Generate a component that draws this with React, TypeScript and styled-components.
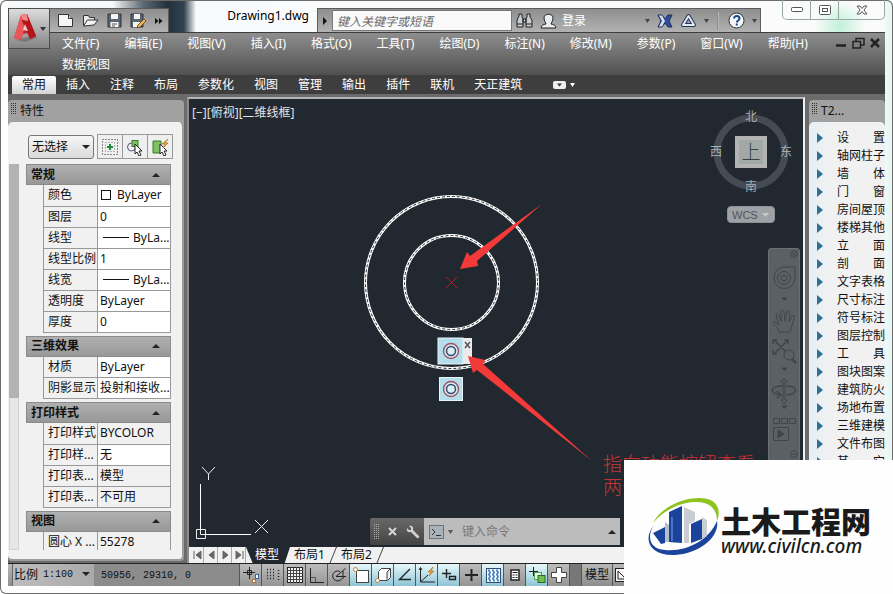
import React from "react";
import styled, { createGlobalStyle, css } from "styled-components";

const Global = createGlobalStyle`
  * { box-sizing: border-box; }
  html, body { margin: 0; height: 100%; background: #fff; }
  body {
    font: 12px/16px "Noto Sans", "Noto Sans CJK SC", sans-serif;
    color: #111;
    overflow: hidden;
  }
  button, input, select { font: inherit; color: inherit; margin: 0; padding: 0; border: 0; border-radius: 0; background: none; }
  select { appearance: none; }
  svg { display: block; flex: none; }
`;

/* ---------- window frame ---------- */

const Window = styled.div`
  position: relative;
  display: flex;
  flex-direction: column;
  height: 100vh;
  padding: 0 7px 7px;
  border: 1px solid #6c6c6c;
  border-top-width: 0;
  border-radius: 6px;
  box-shadow: inset 0 1px #6c6c6c;
  background: linear-gradient(90deg, #fff 0 98%, #e4f6f3 100%);
  overflow: hidden;
`;

const TitleBar = styled.header`
  display: flex;
  align-items: flex-end;
  height: 32px;
  background:
    radial-gradient(circle at 832px 26px, #bff0d8 0, transparent 26px),
    linear-gradient(90deg, #f6f7f8 105px, #5d6a74 135px, #22303b 160px, #33434f 176px, #f9fafb 188px, #fbfbfc 100%);
  box-shadow: inset 0 1px #6c6c6c;
  flex: none;
`;

const barFill = css`
  background: linear-gradient(#8e8e8e, #b2b2b2);
  border: 1px solid #5c5c5c;
  border-bottom: 0;
`;

const AppButton = styled.button`
  position: absolute;
  z-index: 2;
  left: 7px;
  top: 8px;
  display: flex;
  align-items: center;
  justify-content: center;
  gap: 2px;
  width: 42px;
  height: 41px;
  border: 1px solid #4b4b4b;
  background: linear-gradient(#dcdcdc, #858585);
`;

const QuickBar = styled.div`
  ${barFill}
  display: flex;
  align-items: center;
  gap: 8px;
  width: 122px;
  height: 24px;
  margin-left: 41px;
  padding-left: 7px;
`;

const IconButton = styled.button`
  display: flex;
  align-items: center;
  justify-content: center;
  flex: none;
`;

const FileName = styled.h1`
  flex: 1;
  margin: 0;
  padding: 0 8px 0 58px;
  font-size: 12px;
  font-weight: 400;
  line-height: 32px;
  color: #000;
  white-space: nowrap;
`;

const SearchBar = styled.div`
  ${barFill}
  display: flex;
  align-items: center;
  width: 444px;
  height: 24px;
  margin-right: 21px;
  flex: none;
`;

const SearchInput = styled.input`
  width: 180px;
  height: 21px;
  padding: 2px 4px 0;
  border: 1px solid #777;
  background: #fafafa;
  font-style: italic;
  &::placeholder { color: #666; opacity: 1; }
`;

const SearchTools = styled.div`
  display: flex;
  flex: 1;
  align-items: center;
  justify-content: space-between;
  padding: 0 3px 0 4px;
`;

const ToolCluster = styled.div`
  display: flex;
  align-items: center;
  gap: 7px;
`;

const SignIn = styled.button`
  display: flex;
  align-items: center;
  gap: 5px;
  color: #fff;
  white-space: nowrap;
`;

const WindowButtons = styled.div`
  display: flex;
  align-self: flex-start;
  width: 103px;
  height: 20px;
  border: 1px solid #9aa5a5;
  border-top: 0;
  border-radius: 0 0 5px 5px;
  flex: none;
`;

const WindowButton = styled.button<{ $wide?: boolean }>`
  display: flex;
  align-items: center;
  justify-content: center;
  flex: ${(p) => (p.$wide ? 46 : 28)};
  & + & { border-left: 1px solid #9aa5a5; }
`;

/* ---------- menus and ribbon ---------- */

const MenuRow = styled.div`
  display: flex;
  align-items: flex-start;
  padding: 0 5px 0 54px;
  border-top: 1px solid #3d3d3d;
  background: linear-gradient(#8e8e8e, #505050);
  flex: none;
`;

const Menu = styled.nav`
  display: flex;
  flex: 1;
  flex-wrap: wrap;
  column-gap: 25px;
`;

const MenuItem = styled.button`
  height: 21px;
  line-height: 20px;
  color: #fff;
  white-space: nowrap;
`;

const DocButtons = styled.div`
  display: flex;
  gap: 5px;
  margin-top: 4px;
`;

const Ribbon = styled.div`
  display: flex;
  align-items: stretch;
  height: 19px;
  padding-left: 4px;
  background: #3e3e3e;
  flex: none;
`;

const RibbonTab = styled.button<{ $active?: boolean }>`
  padding: 0 10px;
  color: ${(p) => (p.$active ? "#111" : "#fff")};
  background: ${(p) => (p.$active ? "linear-gradient(#fff, #d4d4d4)" : "none")};
  line-height: 18px;
  margin-top: 1px;
  border-radius: 2px 2px 0 0;
  white-space: nowrap;
`;

const RibbonExtra = styled.button`
  display: flex;
  align-items: center;
  gap: 4px;
  margin-left: 21px;
`;

/* ---------- work area ---------- */

const Body = styled.main`
  display: flex;
  flex: 1;
  min-height: 0;
  padding-top: 3px;
  background: #6b6b6b;
`;

const Panel = styled.section<{ $width: number; $gap?: number }>`
  display: flex;
  flex-direction: column;
  width: ${(p) => p.$width}px;
  margin: 3px 0 2px ${(p) => p.$gap || 0}px;
  border-radius: 4px;
  background: #a1a1a1;
  overflow: hidden;
  flex: none;
`;

const PanelTitle = styled.h2`
  display: flex;
  align-items: center;
  gap: 4px;
  height: 22px;
  margin: 0;
  padding-left: 3px;
  font-size: 12px;
  font-weight: 400;
  flex: none;
  svg { align-self: flex-start; margin-top: 3px; }
`;

const PanelBody = styled.div`
  display: flex;
  flex-direction: column;
  flex: 1;
  min-height: 0;
  padding: 12px 11px 9px 0;
  border-right: 2px solid #9c9c9c;
  border-bottom: 2px solid #9c9c9c;
  border-radius: 5px;
  background: #f1f1f1;
`;

const SelectionRow = styled.div`
  display: flex;
  align-items: center;
  height: 25px;
  margin: 0 -4px 5px 20px;
  flex: none;
`;

const SelectWrap = styled.label`
  position: relative;
  display: block;
  width: 66px;
  margin-right: 3px;
  select {
    width: 100%;
    height: 24px;
    padding-left: 3px;
    border: 1px solid #777;
    border-radius: 3px;
    background: linear-gradient(#f6f6f6, #dadada);
  }
  svg { position: absolute; right: 4px; top: 10px; pointer-events: none; }
`;

const SquareButton = styled.button`
  display: flex;
  align-items: center;
  justify-content: center;
  width: 26px;
  height: 25px;
  border: 1px solid #999;
  margin-right: -1px;
  background: #efefef;
`;

const PropertyScroll = styled.div`
  display: flex;
  flex: 1;
  min-height: 0;
  gap: 7px;
  overflow: hidden;
`;

const ScrollTrack = styled.div`
  width: 10px;
  margin-left: 1px;
  border: 1px solid #d2d2d2;
  background: #e6e6e6;
  &::before { content: ""; display: block; height: 61%; margin: -1px; background: #b2b2b2; }
  flex: none;
`;

const Groups = styled.div`
  display: flex;
  flex: 1;
  min-width: 0;
  flex-direction: column;
  gap: 3px;
  overflow: hidden;
`;

const GroupHead = styled.button`
  display: flex;
  align-items: center;
  justify-content: space-between;
  width: 100%;
  height: 21px;
  padding: 0 10px 0 4px;
  border: 1px solid #8b8b8b;
  background: linear-gradient(#b0b0b0, #989898);
  font-weight: 700;
`;

const PropTable = styled.table`
  width: 128px;
  margin-left: 17px;
  table-layout: fixed;
  border-collapse: collapse;
`;

const PropLabel = styled.th`
  width: 54px;
  height: 21px;
  padding: 0 0 0 4px;
  border: 1px solid #999;
  border-top: 0;
  font-weight: 400;
  text-align: left;
  white-space: nowrap;
  overflow: hidden;
`;

const PropValue = styled.td<{ $locked?: boolean }>`
  height: 21px;
  padding: 0 0 0 2px;
  border: 1px solid #999;
  border-top: 0;
  background: ${(p) => (p.$locked ? "#f1f1f1" : "#fff")};
  white-space: nowrap;
  overflow: hidden;
`;

const Sample = styled.span<{ $kind: "swatch" | "line" }>`
  display: inline-block;
  vertical-align: middle;
  ${(p) =>
    p.$kind === "swatch"
      ? "width: 10px; height: 10px; border: 1px solid #111; margin: -2px 6px 0 1px;"
      : "width: 26px; height: 1px; background: #111; margin: -2px 4px 0 3px;"}
`;

const DrawingColumn = styled.section`
  display: flex;
  flex: 1;
  flex-direction: column;
  min-width: 0;
  margin-left: 3px;
  border: solid;
  border-width: 2px 2px 0 2px;
  border-color: #b5b5b5 #f0f0f0 #b5b5b5 #8c8c8c;
`;

const Canvas = styled.div`
  position: relative;
  flex: 1;
  min-height: 0;
  background: #222830;
  overflow: hidden;
`;

const Drawing = styled.svg`
  position: absolute;
  left: 0;
  top: 0;
`;

const ViewLabel = styled.div`
  position: absolute;
  left: 3px;
  top: 6px;
  color: #e4e4e4;
  white-space: nowrap;
`;

const Annotation = styled.p`
  position: absolute;
  left: 414px;
  top: 354px;
  margin: 0;
  color: #c83434;
  font-size: 19px;
  font-weight: 300;
  line-height: 23px;
  white-space: nowrap;
`;

const ViewCube = styled.div`
  position: absolute;
  right: 11px;
  top: 10px;
  display: grid;
  grid-template-columns: 12px 58px 12px;
  grid-template-rows: 16px 54px 16px;
  place-items: center;
  color: #a9adb0;
`;

const CubeRing = styled.svg`
  position: absolute;
  left: 3px;
  top: 5px;
`;

const Compass = styled.span<{ $area: string }>`
  position: relative;
  grid-area: ${(p) => p.$area};
`;

const CubeFace = styled.button`
  position: relative;
  grid-area: 2 / 2;
  width: 32px;
  height: 32px;
  border: 4px solid #b2b3b2;
  background: #a2a8a5;
  color: #3a4145;
  font-size: 19px;
  font-weight: 300;
  line-height: 22px;
`;

const WcsButton = styled.button`
  position: absolute;
  right: 28px;
  top: 107px;
  display: flex;
  align-items: center;
  justify-content: space-between;
  width: 48px;
  height: 17px;
  padding: 0 5px 0 4px;
  border: 1px solid #8c9196;
  border-radius: 4px;
  background: #9ea2a6;
  font: 11px/14px "Liberation Sans", sans-serif;
  color: #50565c;
`;

const NavBar = styled.div`
  position: absolute;
  right: 3px;
  top: 149px;
  display: flex;
  flex-direction: column;
  align-items: center;
  width: 32px;
  height: 214px;
  border: 1px solid #6c7074;
  border-radius: 3px;
  background: #5b6064;
`;

const CommandBar = styled.form`
  position: absolute;
  left: 181px;
  bottom: 2px;
  display: flex;
  width: 250px;
  height: 27px;
`;

const CommandGrip = styled.div`
  display: flex;
  align-items: center;
  gap: 9px;
  width: 54px;
  padding-left: 4px;
  background: linear-gradient(#686868, #444);
  border-radius: 2px 0 0 2px;
`;

const CommandField = styled.label`
  display: flex;
  flex: 1;
  align-items: center;
  gap: 4px;
  min-width: 0;
  padding: 0 4px 0 5px;
  background: #bcbcbc;
  input { flex: 1; min-width: 0; margin-left: 5px; }
  input::placeholder { color: #777; opacity: 1; }
`;

const SheetBar = styled.div`
  display: flex;
  height: 16px;
  padding-left: 1px;
  background: #f1f1f1;
  flex: none;
`;

const SheetStep = styled.button`
  display: flex;
  align-items: center;
  justify-content: center;
  width: 14px;
  border-right: 1px solid #aaa;
`;

const SheetTab = styled.button<{ $active?: boolean }>`
  line-height: 16px;
  white-space: nowrap;
  ${(p) =>
    p.$active
      ? "padding: 0 11px 0 9px; color: #fff; background: #222830; clip-path: polygon(0 0, 100% 0, 88% 100%, 15% 100%);"
      : "padding: 0 4px;"}
`;

const TreeList = styled.ul`
  flex: 1;
  min-height: 0;
  margin: 0;
  padding: 7px 0 0 8px;
  list-style: none;
  background: linear-gradient(90deg, #e6f0f4, #f1f1f1 30%);
  border-radius: 5px 5px 0 0;
  overflow: hidden;
`;

const TreeItem = styled.button`
  display: flex;
  align-items: center;
  gap: 14px;
  height: 18px;
  white-space: pre;
`;

/* ---------- status bar ---------- */

const StatusBar = styled.footer`
  display: flex;
  height: 23px;
  padding-left: 4px;
  border-top: 1px solid #222;
  background: linear-gradient(#b8b8b8, #8e8e8e);
  flex: none;
`;

const ScaleBox = styled.label`
  position: relative;
  display: flex;
  align-items: center;
  gap: 5px;
  width: 82px;
  padding-left: 1px;
  border-left: 1px solid #666;
  background: linear-gradient(90deg, #bdbdbd, #aaa);
  white-space: nowrap;
  select { width: 48px; height: 20px; font: 10px/20px "Liberation Mono", monospace; }
  svg { position: absolute; right: 4px; top: 8px; pointer-events: none; }
`;

const Coordinates = styled.output`
  width: 145px;
  padding: 2px 0 0 7px;
  background: #8c8c8c;
  font: 10px/20px "Liberation Mono", monospace;
  white-space: nowrap;
`;

const StatusToggle = styled.button<{ $on?: boolean }>`
  display: flex;
  align-items: center;
  justify-content: center;
  width: 22px;
  border-left: 1px solid #555;
  background: ${(p) => (p.$on ? "linear-gradient(#e6f7fa, #8fc5d6)" : "linear-gradient(#bcbcbc, #959595)")};
  flex: none;
`;

const StatusGap = styled.div`
  width: 12px;
  border-left: 1px solid #555;
  background: #777;
`;

const StatusText = styled.button`
  width: 32px;
  border: solid #555;
  border-width: 0 1px;
`;

/* ---------- site badge ---------- */

const Badge = styled.a`
  position: fixed;
  right: 0;
  bottom: 0;
  display: flex;
  align-items: flex-start;
  gap: 1px;
  width: 269px;
  height: 134px;
  padding: 37px 0 0 24px;
  background: #fefefe;
  color: #1a1a1a;
  text-decoration: none;
`;

const BadgeText = styled.span`
  display: flex;
  flex-direction: column;
  margin-top: 7px;
  strong { font: 900 30px/32px "Noto Sans CJK SC", sans-serif; white-space: nowrap; }
  em { font: italic 500 19px/20px "Noto Sans", sans-serif; }
`;

/* ---------- icons ---------- */

const Caret = ({ w = 7, up = false, color = "#222" }: { w?: number; up?: boolean; color?: string }) => (
  <svg width={w} height="4" viewBox="0 0 8 4" preserveAspectRatio="none" aria-hidden="true">
    <path d={up ? "M0 4h8L4 0z" : "M0 0h8L4 4z"} fill={color} />
  </svg>
);

const Grip = ({ rows = 6, color = "#333" }: { rows?: number; color?: string }) => (
  <svg width="5" height={rows * 2} aria-hidden="true">
    {Array.from({ length: rows }, (_, i) => (
      <path key={i} d={`M0 ${i * 2 + 0.5}h1m1 0h1m1 0h1`} stroke={color} />
    ))}
  </svg>
);

const Icon = ({ size = 18, children }: { size?: number; children: React.ReactNode }) => (
  <svg width={size} height={size} viewBox="0 0 18 18" fill="none" stroke="#222" aria-hidden="true">
    {children}
  </svg>
);

const cursorPath = "M9 6v10l2-2 2 4 2-1-2-4h3z";

const statusIcons: { name: string; on?: boolean; art: React.ReactNode }[] = [
  { name: "推断约束", art: <><path d="M7.500 1v12M1 6.500h12M5.500 4.500h4v4h-4z" /><rect x="13.500" y="8.500" width="3" height="4" fill="#fff" stroke="#3567a8" /><rect x="10.500" y="13.500" width="3" height="3" fill="#fff" stroke="#b8702c" /></> },
  { name: "捕捉", art: <path d="M3 3.500h9M3 6.500h9M3 9.500h9M3 12.500h9M14.500 4v10" strokeDasharray="1 2" strokeWidth="1.500" /> },
  { name: "栅格", art: <><rect x="1.500" y="1.500" width="15" height="15" fill="#f4f4f4" /><path d="M4.500 1v16M7.500 1v16M10.500 1v16M13.500 1v16M1 4.500h16M1 7.500h16M1 10.500h16M1 13.500h16" stroke="#444" /></> },
  { name: "正交", art: <><path d="M2.500 2v14.500H16" /><path d="M3 11.500h4.500V16" stroke="#555" /></> },
  { name: "极轴", art: <path d="M10 5.500a5 5 0 1 0 2 7M15.500 2.500L6 10.500h10M13 5v8" /> },
  { name: "对象捕捉", on: true, art: <><rect x="4.500" y="4.500" width="12" height="12" fill="#fff" stroke="#444" /><circle cx="3.500" cy="3.500" r="2" fill="#fff" stroke="#c87a30" /></> },
  { name: "三维捕捉", on: true, art: <><path d="M4.500 5.500l3-3h9v9l-3 3h-9zM16 3l-3 3v8" fill="#fff" stroke="#444" /><circle cx="3.500" cy="14.500" r="2" fill="#fff" stroke="#c87a30" /></> },
  { name: "对象追踪", on: true, art: <path d="M14 3L3.500 13.500H15" strokeWidth="1.400" /> },
  { name: "动态UCS", on: true, art: <><path d="M2.500 2v14H17M3 15.500L10 9M1 4l1.500-2.500L4 4" /><path d="M15 1l-5 5 3 0-2 4 5-5h-3z" fill="#f2a43a" stroke="#b66a16" strokeWidth=".6" /></> },
  { name: "动态输入", on: true, art: <path d="M6.500 3v9M2 7.500h9M9.500 10.500h6v3h-6z" strokeWidth="1.400" /> },
  { name: "线宽", art: <path d="M9.500 3v12M3 9h13" strokeWidth="2" /> },
  { name: "透明度", on: true, art: <><rect x="2.500" y="2.500" width="14" height="14" fill="#eef8ff" stroke="#334e70" /><path d="M4 4.500h12M5 6.500h11M4 8.500h12M5 10.500h11M4 12.500h12M5 14.500h11" stroke="#4a86c8" strokeWidth="2" strokeDasharray="2 2" /></> },
  { name: "快捷特性", art: <><rect x="5" y="4" width="8" height="10" fill="#fff" strokeWidth="1.500" /><path d="M6.500 6.500h5M6.500 9h2m1 0h2M6.500 11.500h2m1 0h2" /></> },
  { name: "选择循环", on: true, art: <><path d="M5.500 1v9M1 5.500h9" /><rect x="6.500" y="6.500" width="7" height="7" fill="#eef5ee" stroke="#4a5" /><rect x="10" y="9.500" width="7" height="7" fill="#6fc04f" stroke="#276a27" /></> },
  { name: "注释监视器", art: <path d="M6.500 1.500h5v5h5v5h-5v5h-5v-5h-5v-5h5z" fill="#fff" stroke="#444" /> },
];

/* ---------- data ---------- */

const menus = ["文件(F)", "编辑(E)", "视图(V)", "插入(I)", "格式(O)", "工具(T)", "绘图(D)", "标注(N)", "修改(M)", "参数(P)", "窗口(W)", "帮助(H)", "数据视图"];
const tabs = ["常用", "插入", "注释", "布局", "参数化", "视图", "管理", "输出", "插件", "联机", "天正建筑"];

type Prop = { label: string; value: string; sample?: "swatch" | "line"; locked?: boolean };
const groups: { title: string; rows: Prop[] }[] = [
  {
    title: "常规",
    rows: [
      { label: "颜色", value: "ByLayer", sample: "swatch" },
      { label: "图层", value: "0" },
      { label: "线型", value: "ByLa...", sample: "line" },
      { label: "线型比例", value: "1" },
      { label: "线宽", value: "ByLa...", sample: "line" },
      { label: "透明度", value: "ByLayer" },
      { label: "厚度", value: "0" },
    ],
  },
  { title: "三维效果", rows: [{ label: "材质", value: "ByLayer" }, { label: "阴影显示", value: "投射和接收..." }] },
  {
    title: "打印样式",
    rows: [
      { label: "打印样式", value: "BYCOLOR", locked: true },
      { label: "打印样...", value: "无" },
      { label: "打印表...", value: "模型", locked: true },
      { label: "打印表...", value: "不可用", locked: true },
    ],
  },
  { title: "视图", rows: [{ label: "圆心 X ...", value: "55278", locked: true }] },
];

const tree = ["设　　置", "轴网柱子", "墙　　体", "门　　窗", "房间屋顶", "楼梯其他", "立　　面", "剖　　面", "文字表格", "尺寸标注", "符号标注", "图层控制", "工　　具", "图块图案", "建筑防火", "场地布置", "三维建模", "文件布图", "其　　它"];

/* ---------- sections ---------- */

const Title = () => (
  <TitleBar>
    <AppButton aria-label="应用程序菜单">
      <svg width="25" height="32" viewBox="0 0 25 32" aria-hidden="true">
        <path d="M3 27L12 29 24 25 22 22z" fill="#5c5c5c" opacity=".5" />
        <path d="M8 2l6-1 9 22-6 3-2-6-5 1-2 6-7-2z" fill="#c9262c" />
        <path d="M8 2l6-1-4 20-2 6-7-2z" fill="#e8575a" />
        <path d="M14 1l9 22-6 3L9 8z" fill="#b3151c" />
        <path d="M8 2l6-1 1 7-5-1z" fill="#f28b86" />
        <path d="M10 17l2-6 3 7z" fill="#f5c9c4" />
      </svg>
      <Caret w={6} color="#333" />
    </AppButton>
    <QuickBar>
      <IconButton aria-label="新建">
        <svg width="17" height="15" viewBox="0 0 17 15"><path d="M1.500 1.500h10l4 4v8h-14z" fill="#f4f6f8" stroke="#333" /><path d="M11.500 1.500v4h4" fill="#ccc" stroke="#333" /></svg>
      </IconButton>
      <IconButton aria-label="打开">
        <svg width="17" height="15" viewBox="0 0 17 15"><path d="M1.500 12V2.500h5l1 2h5v3" fill="#e8e8e8" stroke="#333" /><path d="M1.500 13l4-6h10.500l-4 5z" fill="#f6f6f6" stroke="#333" /></svg>
      </IconButton>
      <IconButton aria-label="保存">
        <svg width="15" height="15" viewBox="0 0 15 15"><path d="M1 1h13v13H1z" fill="#5a6670" stroke="#2c333a" /><path d="M4 1h7v5H4zM3.500 9h8v5h-8z" fill="#f4f4f4" /><path d="M5 11h5M5 13h3" stroke="#555" /></svg>
      </IconButton>
      <IconButton aria-label="另存为">
        <svg width="17" height="16" viewBox="0 0 17 16"><path d="M1 1h12v13H1z" fill="#5a6670" stroke="#2c333a" /><path d="M4 1h6v5H4zM3 9h8v5H3z" fill="#f4f4f4" /><path d="M7 15l1-3 6-6 2 2-6 6z" fill="#f1b656" stroke="#7b531d" /></svg>
      </IconButton>
      <IconButton aria-label="更多">
        <svg width="8" height="6" viewBox="0 0 8 6"><path d="M0 0l3.500 3L0 6zM4 0l3.500 3L4 6z" fill="#111" /></svg>
      </IconButton>
    </QuickBar>
    <FileName>Drawing1.dwg</FileName>
    <SearchBar role="search">
      <IconButton aria-label="展开">
        <svg width="14" height="22" viewBox="0 0 14 22"><path d="M5 7v8l4-4z" fill="#111" /></svg>
      </IconButton>
      <SearchInput aria-label="搜索" placeholder="键入关键字或短语" />
      <SearchTools>
        <ToolCluster>
          <IconButton aria-label="查找">
            <svg width="17" height="17" viewBox="0 0 17 17" fill="#c7cdd1" stroke="#222"><path d="M3 2h3v3l1 2v8H1V8l2-4zM11 2h3v3l2 3v7h-6V7l1-2zM7 7h3v3H7z" /><path d="M1 12h6M10 12h6" /></svg>
          </IconButton>
          <SignIn>
            <svg width="17" height="16" viewBox="0 0 17 16" fill="#e9edf0" stroke="#222"><path d="M1 15c0-3 3-3.500 5-4 0-1-2-3-2-6 0-5 9-5 9 0 0 3-2 5-2 6 2 .5 5 1 5 4z" /></svg>
            登录
          </SignIn>
        </ToolCluster>
        <ToolCluster>
          <Caret w={5} color="#444" />
          <IconButton aria-label="Exchange">
            <svg width="16" height="14" viewBox="0 0 16 14"><path d="M1 1h4l3 4 3-4h4l-3 6 3 6h-4L8 9l-3 4H1l3-6z" fill="#2f4f9c" stroke="#1d2f5c" /><path d="M2 1.500h3L8 7l-3 5.500H2L5 7z" fill="#d8e0f0" /></svg>
          </IconButton>
          <IconButton aria-label="保持连接">
            <svg width="17" height="15" viewBox="0 0 17 15" fill="none"><path d="M8.500 3L3 12h11z" stroke="#23355e" strokeWidth="4" strokeLinejoin="round" /><path d="M8.500 3L3 12h11z" stroke="#e3e8f2" strokeWidth="2" strokeLinejoin="round" /></svg>
          </IconButton>
          <Caret w={5} color="#444" />
          <svg width="5" height="18"><path d="M1.500 0v18" stroke="#8c8c8c" /><path d="M2.500 0v18" stroke="#b8b8b8" /></svg>
          <IconButton aria-label="帮助">
            <svg width="17" height="17" viewBox="0 0 17 17"><circle cx="8.500" cy="8.500" r="7.500" fill="#f4f7fa" stroke="#333" /><path d="M6 6.500c0-3.500 5.500-3 5.500 0 0 2-2.700 2-2.700 4M8.800 11.500v2" fill="none" stroke="#1c4a8c" strokeWidth="2" /></svg>
          </IconButton>
          <Caret w={5} color="#444" />
        </ToolCluster>
      </SearchTools>
    </SearchBar>
    <WindowButtons>
      <WindowButton aria-label="最小化"><svg width="12" height="5"><rect x=".5" y=".5" width="11" height="4" rx="1" fill="#fff" stroke="#555" /></svg></WindowButton>
      <WindowButton aria-label="还原"><svg width="12" height="10"><rect x=".5" y=".5" width="11" height="9" rx="1" fill="#fff" stroke="#555" /><rect x="3.500" y="3.500" width="5" height="3" fill="none" stroke="#555" /></svg></WindowButton>
      <WindowButton $wide aria-label="关闭"><svg width="12" height="10"><path d="M1 1h3l2 2.500L8 1h3L8 5l3 4H8L6 6.500 4 9H1l3-4z" fill="#fff" stroke="#555" /></svg></WindowButton>
    </WindowButtons>
  </TitleBar>
);

const Properties = () => (
  <Panel $width={176}>
    <PanelTitle><Grip />特性</PanelTitle>
    <PanelBody>
      <SelectionRow>
        <SelectWrap>
          <select aria-label="选择对象"><option>无选择</option></select>
          <Caret w={8} />
        </SelectWrap>
        <SquareButton aria-label="切换 PICKADD"><Icon><rect x="1.500" y="1.500" width="15" height="15" strokeDasharray="1 2" /><rect x="4.500" y="4.500" width="9" height="9" stroke="#777" strokeDasharray="1 2" /><path d="M9 6v6M6 9h6" stroke="#1d8a3c" strokeWidth="2" /></Icon></SquareButton>
        <SquareButton aria-label="选择对象"><Icon><circle cx="5.500" cy="9" r="4" stroke="#557" /><rect x="6" y="2.500" width="6" height="6" fill="#7fc263" stroke="#3b7a2b" /><path d={cursorPath} fill="#fff" /></Icon></SquareButton>
        <SquareButton aria-label="快速选择"><Icon><path d="M2 3h8v12H2z" fill="#7fc263" stroke="#3b7a2b" /><path d={cursorPath} fill="#fff" /><path d="M17 1l-6 5h3l-2 4 5-5h-3z" fill="#f5b83c" stroke="#a8681c" strokeWidth=".7" /></Icon></SquareButton>
      </SelectionRow>
      <PropertyScroll>
        <ScrollTrack />
        <Groups>
          {groups.map((g) => (
            <div key={g.title}>
              <GroupHead>{g.title}<Caret w={8} up /></GroupHead>
              <PropTable>
                <tbody>
                  {g.rows.map((r, i) => (
                    <tr key={i}>
                      <PropLabel scope="row">{r.label}</PropLabel>
                      <PropValue $locked={r.locked}>{r.sample && <Sample $kind={r.sample} />}{r.value}</PropValue>
                    </tr>
                  ))}
                </tbody>
              </PropTable>
            </div>
          ))}
        </Groups>
      </PropertyScroll>
    </PanelBody>
  </Panel>
);

const DrawingArea = () => (
  <DrawingColumn>
    <Canvas>
      <ViewLabel>[−][俯视][二维线框]</ViewLabel>
      <Annotation>指向功能按钮查看<br />两个功能</Annotation>
      <Drawing width="614" height="448" viewBox="189 99 614 448" fill="none" aria-hidden="true">
        {[86, 47].map((r) => (
          <g key={r}>
            <circle cx="451.500" cy="282.500" r={r} stroke="#fff" strokeWidth="3" />
            <circle cx="451.500" cy="282.500" r={r} stroke="#222830" strokeWidth="1" strokeDasharray="3 2" />
          </g>
        ))}
        <path d="M446 277l11 11M457 277l-11 11" stroke="#a82228" />
        <path d="M200.500 484v45M206 534.500h45" stroke="#fff" />
        <path d="M196.500 529.500h9v9h-9zM200.500 529v5.500H206M202 467l6.500 7v6M215 467l-6.500 7M255 520l13 13M268 520l-13 13" stroke="#eee" />
        <rect x="438" y="338" width="25" height="26" fill="#b5deec" stroke="#e8f4f8" />
        <rect x="463" y="338" width="9" height="26" fill="#eaeaea" />
        <path d="M465 342l5 6M470 342l-5 6" stroke="#555" strokeWidth="1.500" />
        <rect x="439.500" y="377.500" width="23" height="23" fill="#b5deec" stroke="#e8f4f8" />
        {[351, 389].map((y) => (
          <g key={y}>
            <circle cx="451" cy={y} r="7.500" fill="#d8edf4" stroke="#9c5363" strokeWidth="1.400" />
            <circle cx="451" cy={y} r="4.500" stroke="#34496b" strokeWidth="1.500" />
          </g>
        ))}
        <path d="M460 269l7-17 3 4 72-52-65 57 1 5z" fill="#f43a38" />
        <path d="M468 356l17 4-2 4 109 97-115-91-4 3z" fill="#f43a38" />
      </Drawing>
      <ViewCube>
        <CubeRing width="76" height="76" viewBox="0 0 76 76" fill="none" aria-hidden="true"><circle cx="38" cy="38" r="34" stroke="#444b53" strokeWidth="7" /></CubeRing>
        <Compass $area="1 / 2">北</Compass>
        <Compass $area="2 / 1">西</Compass>
        <CubeFace>上</CubeFace>
        <Compass $area="2 / 3">东</Compass>
        <Compass $area="3 / 2">南</Compass>
      </ViewCube>
      <WcsButton>WCS<Caret w={7} color="#c5c9cc" /></WcsButton>
      <NavBar aria-label="导航栏">
        <svg width="30" height="212" viewBox="0 0 30 212" fill="none" stroke="#3f4549" aria-hidden="true">
          <circle cx="25" cy="5" r="3.500" /><path d="M23 3l4 4M27 3l-4 4" />
          <path d="M5 29a10.500 10.500 0 0 1 10-11h11v11a10.500 10.500 0 0 1-21 0z" /><circle cx="15" cy="29" r="6.500" /><circle cx="15" cy="29" r="3" />
          <path d="M13 49h5l-2.500 2.500zM13 119h5l-2.500 2.500zM13 157h5l-2.500 2.500z" fill="#3f4549" />
          <path d="M10 83c-1-4-4-7-6-9 1-3 4 0 6 2L7 66c0-2 2-2 3 0l2 6V63c0-2 3-2 3 0l1 9 2-9c1-2 3-1 3 1l-1 9 3-6c2-1 3 0 2 2-1 5-3 10-4 14z" />
          <path d="M5 91l14 14M19 91L5 105M4 95v-4h4M15 91h4v4M4 101v4h4" strokeWidth="1.500" /><circle cx="20" cy="106" r="5" fill="#5b6064" /><path d="M23 110l4 4" strokeWidth="2.500" />
          <path d="M15 129l3 4h-2v18h2l-3 4-3-4h2v-18h-2z" /><path d="M14 137c-14 0-14 8-2 9M17 137c13 0 12 8 1 9M8 142l4 4-4 3" strokeWidth="1.500" />
          <path d="M4.500 169.500h6v5h-6zM12.500 169.500h6v5h-6zM20.500 169.500h6v5h-6zM4.500 178.500h15v13h-15z" /><path d="M9 181v8l6-4z" fill="#3f4549" />
          <circle cx="25" cy="205" r="3.500" /><path d="M23 205h4" />
        </svg>
      </NavBar>
      <CommandBar>
        <CommandGrip>
          <Grip rows={8} color="#aaa" />
          <svg width="9" height="9"><path d="M1 1l7 7M8 1L1 8" stroke="#d5d5d5" strokeWidth="2" /></svg>
          <svg width="14" height="14" viewBox="0 0 14 14"><path d="M3 1l2 2v2H3L1 3C0 6 2 8 5 7l6 6c1 1 3-1 2-2L7 5c1-3-1-5-4-4z" fill="#d0d0d0" /></svg>
        </CommandGrip>
        <CommandField>
          <svg width="15" height="14" viewBox="0 0 15 14" fill="none"><rect x=".5" y=".5" width="14" height="13" fill="#a9b2bb" stroke="#69737c" /><path d="M3 4l3 3-3 3M7 10.500h5" stroke="#333" /></svg>
          <Caret w={5} color="#555" />
          <input aria-label="命令" placeholder="键入命令" />
          <Caret up w={8} />
        </CommandField>
      </CommandBar>
    </Canvas>
    <SheetBar>
      {["M3 2v8M10 2L5 6l5 4z", "M9 2L4 6l5 4z", "M4 2l5 4-5 4z", "M10 2v8M3 2l5 4-5 4z"].map((d, i) => (
        <SheetStep key={i} aria-label={["首个布局", "上一个布局", "下一个布局", "末尾布局"][i]}>
          <svg width="12" height="12"><path d={d} fill="#666" stroke="#666" /></svg>
        </SheetStep>
      ))}
      <SheetTab $active>模型</SheetTab>
      {["布局1", "布局2"].map((s) => (
        <React.Fragment key={s}>
          <SheetTab>{s}</SheetTab>
          <svg width="8" height="16" aria-hidden="true"><path d="M7.500 0L1 16" stroke="#444" /></svg>
        </React.Fragment>
      ))}
    </SheetBar>
  </DrawingColumn>
);

export default function App() {
  return (
    <>
      <Global />
      <Window>
        <Title />
        <MenuRow>
          <Menu>{menus.map((m) => <MenuItem key={m}>{m}</MenuItem>)}</Menu>
          <DocButtons>
            <IconButton aria-label="最小化图形"><svg width="11" height="12"><path d="M0 8.500h10" stroke="#222" strokeWidth="2.500" /></svg></IconButton>
            <IconButton aria-label="还原图形"><svg width="13" height="12" fill="none" stroke="#222"><path d="M4 4V1.500h8V8H9" strokeWidth="1.500" /><path d="M1 4.500h7.500V11H1z" strokeWidth="1.500" /></svg></IconButton>
            <IconButton aria-label="关闭图形"><svg width="10" height="12"><path d="M1 2l8 8M9 2l-8 8" stroke="#222" strokeWidth="2.500" /></svg></IconButton>
          </DocButtons>
        </MenuRow>
        <Ribbon role="tablist">
          {tabs.map((t, i) => <RibbonTab key={t} role="tab" aria-selected={i === 0} $active={i === 0}>{t}</RibbonTab>)}
          <RibbonExtra aria-label="功能区选项">
            <svg width="13" height="8"><rect width="13" height="8" rx="2" fill="#eee" /><path d="M4 2.500h5L6.500 5.500z" fill="#333" /></svg>
            <Caret w={5} color="#fff" />
          </RibbonExtra>
        </Ribbon>
        <Body>
          <Properties />
          <DrawingArea />
          <Panel $width={76} $gap={4}>
            <PanelTitle><Grip />T2...</PanelTitle>
            <TreeList>
              {tree.map((t) => (
                <li key={t}>
                  <TreeItem><svg width="6" height="10"><path d="M0 0v10l6-5z" fill="#2e6f96" /></svg>{t}</TreeItem>
                </li>
              ))}
            </TreeList>
          </Panel>
        </Body>
        <StatusBar>
          <ScaleBox>
            比例
            <select aria-label="比例"><option>1:100</option></select>
            <Caret w={8} />
          </ScaleBox>
          <Coordinates>50956, 29310, 0</Coordinates>
          {statusIcons.map((s) => (
            <StatusToggle key={s.name} aria-label={s.name} aria-pressed={!!s.on} $on={s.on}>
              <Icon>{s.art}</Icon>
            </StatusToggle>
          ))}
          <StatusGap />
          <StatusText>模型</StatusText>
          <IconButton aria-label="布局"><Icon><rect x="2.500" y="2.500" width="15" height="13" fill="#f4f4f4" /><path d="M5 5v8h8z" /></Icon></IconButton>
        </StatusBar>
      </Window>
      <Badge href="#home">
        <svg width="72" height="60" viewBox="0 0 72 60" aria-hidden="true">
          <path d="M5 26C12 12 32 1 51 1c17 0 23 10 18 23C69 12 62 5 48 5 32 5 16 13 5 26z" fill="#8fc31f" />
          <path d="M6 28C-2 40 2 52 17 53c22 2 44-10 52-29 3 16-18 33-42 34C2 59-6 43 6 28z" fill="#1a449c" />
          <path d="M5 36l12-6v16l-4 1zM21 15l13-6v37l-13-1zM43 27l11-5v20l-11 4z" fill="#1a449c" />
          <path d="M17 25l4 3v17h-4z" fill="#b4bdc8" />
          <path d="M36 10l11 5v9l-6 3v19h-5zM54 20l5 3v16l-5 3z" fill="#c9ced5" />
          <path d="M24 20v24" stroke="#4a74c2" strokeWidth="2" />
        </svg>
        <BadgeText>
          <strong>土木工程网</strong>
          <em>www.civilcn.com</em>
        </BadgeText>
      </Badge>
    </>
  );
}
